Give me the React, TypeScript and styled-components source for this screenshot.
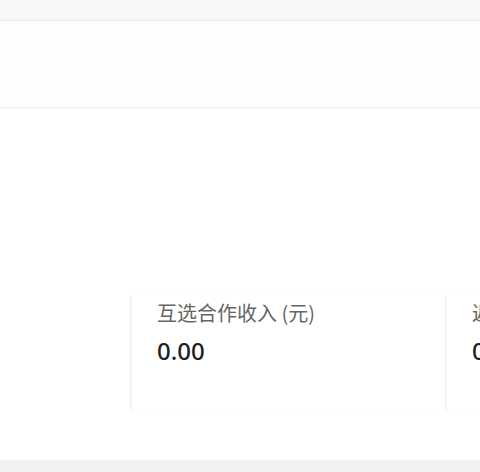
import React from "react";
import styled, { createGlobalStyle } from "styled-components";

const Global = createGlobalStyle`
  html, body { margin: 0; padding: 0; background: #ffffff; }
  body { font-family: "Noto Sans", "Noto Sans CJK SC", sans-serif; }
`;

const Page = styled.div`
  width: 480px;
  height: 472px;
  display: flex;
  flex-direction: column;
  overflow: hidden;
  background: #ffffff;
`;

const TopBand = styled.div`
  height: 20px;
  flex: none;
  background: #f7f7f7;
  border-bottom: 1px solid #ebebeb;
`;

const Header = styled.div`
  height: 86px;
  flex: none;
  background: #fdfdfd;
  border-bottom: 2px solid #f2f2f2;
`;

const Main = styled.div`
  flex: 1;
  display: flex;
  flex-direction: column;
  justify-content: flex-end;
  padding-bottom: 50px;
  background: #ffffff;
`;

const StatsRow = styled.div`
  display: grid;
  grid-template-columns: 130px 315px 315px;
  height: 115px;
`;

const Card = styled.div<{ $divider?: boolean }>`
  padding: 3px 0 0 25px;
  box-sizing: border-box;
  border-left: ${(p) => (p.$divider ? "2px solid #f3f3f3" : "none")};
  box-shadow: ${(p) => (p.$divider ? "-1px 0 2px rgba(0,0,0,0.025)" : "none")};
  white-space: nowrap;
`;

const Label = styled.div`
  font-family: "Noto Sans CJK SC", "Noto Sans", sans-serif;
  font-size: 20px;
  line-height: 30px;
  color: #666666;
`;

const Value = styled.div`
  margin-top: 8px;
  font-family: "Noto Sans", "Open Sans", sans-serif;
  font-size: 24px;
  font-weight: 500;
  line-height: 30px;
  color: #1f1f1f;
`;

const BottomBand = styled.div`
  height: 12px;
  flex: none;
  background: #f2f2f2;
`;

const stats = [
  { label: "互选合作收入 (元)", value: "0.00" },
  { label: "返点收入 (元)", value: "0.00" },
];

export default function App() {
  return (
    <Page>
      <Global />
      <TopBand />
      <Header />
      <Main>
        <StatsRow>
          <Card />
          {stats.map((s) => (
            <Card key={s.label} $divider>
              <Label>{s.label}</Label>
              <Value>{s.value}</Value>
            </Card>
          ))}
        </StatsRow>
      </Main>
      <BottomBand />
    </Page>
  );
}
